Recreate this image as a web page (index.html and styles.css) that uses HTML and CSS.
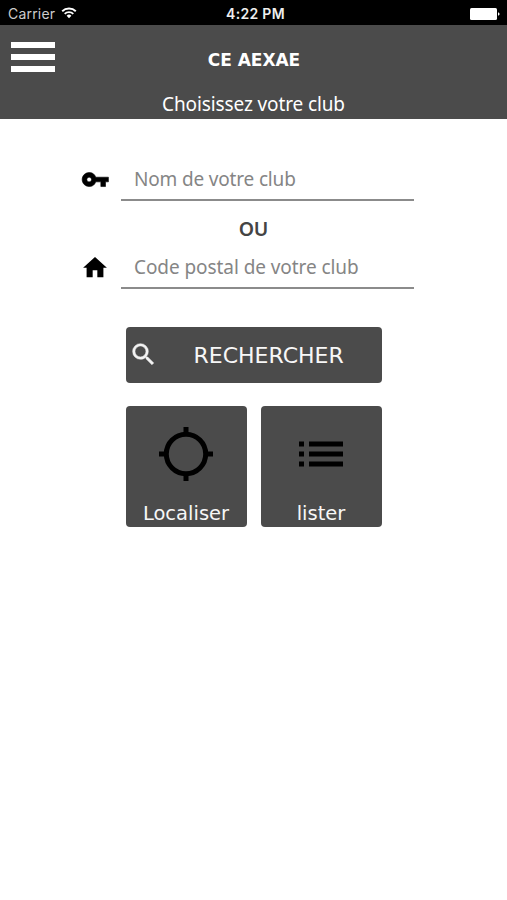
FILE: index.html
```html
<!DOCTYPE html>
<html lang="fr">
<head>
<meta charset="utf-8">
<title>CE AEXAE</title>
<link rel="stylesheet" href="styles.css">
</head>
<body>
<div class="status">
  <div class="carrier"><span>Carrier</span>
    <svg class="wifi" width="16" height="12" viewBox="0 0 16 12" fill="none" stroke="#fff" stroke-width="1.9"><path d="M1.2 4.3a9.8 9.8 0 0 1 13.6 0M3.7 6.9a6.2 6.2 0 0 1 8.6 0"/><path d="M8 11.2 5.6 8.8a3.4 3.4 0 0 1 4.8 0z" fill="#fff" stroke="none"/></svg>
  </div>
  <span class="clock">4:22 PM</span>
  <svg class="battery" width="30" height="12" viewBox="0 0 30 12" fill="#fff"><rect width="27" height="12" rx="1.5"/><path d="M28 4.2q1.6.6 1.6 1.8T28 7.8z"/></svg>
</div>
<header class="header">
  <button class="menu" aria-label="Menu"><i></i><i></i><i></i></button>
  <h1 class="title">CE AEXAE</h1>
  <p class="subtitle">Choisissez votre club</p>
</header>
<main>
  <div class="field">
    <svg width="28" height="28" viewBox="0 0 24 24"><path stroke="#000" stroke-width=".5" d="M12.650 9.600A5.990 5.990 0 0 0 7 5.600c-3.310 0-6 2.690-6 6s2.690 6 6 6a5.990 5.990 0 0 0 5.650-4H17v4h4v-4h2.500v-4H12.650zM7 13.600c-1.100 0-2-.9-2-2s.9-2 2-2 2 .9 2 2-.9 2-2 2z"/></svg>
    <div class="input"><span class="name">Nom de votre club</span></div>
  </div>
  <p class="or">OU</p>
  <div class="field">
    <svg width="28" height="28" viewBox="0 0 24 24"><path d="M10 20v-6h4v6h5.200v-8.200h3L12 2.500 1.800 11.800h3V20z"/></svg>
    <div class="input"><span class="postal">Code postal de votre club</span></div>
  </div>
  <div class="actions">
    <button class="search">
      <svg width="29" height="29" viewBox="0 0 24 24" fill="#f2f2f2" stroke="#f2f2f2" stroke-width=".4"><path d="M15.500 14h-.79l-.28-.27A6.471 6.471 0 0 0 16 9.500 6.500 6.500 0 1 0 9.500 16c1.610 0 3.090-.59 4.230-1.570l.27.28v.79l5 4.990L20.490 19l-4.990-5zm-6 0C7.010 14 5 11.990 5 9.500S7.010 5 9.500 5 14 7.010 14 9.500 11.990 14 9.500 14z"/></svg>
      <span>RECHERCHER</span>
    </button>
    <button class="tile">
      <svg width="54" height="54" viewBox="0 0 54 54" fill="none" stroke="#000" stroke-width="5"><circle cx="27" cy="27" r="19.700"/><path d="M27 0v8M27 46v8M0 27h8M46 27h8"/></svg>
      <span class="locate">Localiser</span>
    </button>
    <button class="tile">
      <svg width="54" height="54" viewBox="0 0 54 54"><path d="M5 14.500h5v5H5zM15 14.500h34v5H15zM5 24.500h5v5H5zM15 24.500h34v5H15zM5 34.500h5v5H5zM15 34.500h34v5H15z"/></svg>
      <span class="list">lister</span>
    </button>
  </div>
</main>
</body>
</html>
```
FILE: styles.css
```css
* { box-sizing: border-box; }
body { margin: 0; min-height: 900px; background: #fff; font-family: "Noto Sans", sans-serif; }
h1, p { margin: 0; }
button { border: 0; padding: 0; font: inherit; }
span { white-space: nowrap; }
.status { height: 25px; background: #000; color: #fff; display: grid; grid-template-columns: 1fr auto 1fr; align-items: center; padding: 2px 7px 0 8px; font: 14px/20px Inter, sans-serif; }
.carrier { display: flex; align-items: center; gap: 6px; color: #ccc; letter-spacing: 0.2px; }
.clock { font-weight: 600; color: #eee; letter-spacing: 0.3px; padding-left: 3px; }
.battery { justify-self: end; }
.wifi { margin-top: -2px; }
.header { height: 94px; background: #4b4b4b; color: #fff; display: grid; grid-template-columns: 55px 1fr 55px; grid-template-rows: 66px 28px; text-align: center; }
.menu { background: none; display: flex; flex-direction: column; gap: 6px; padding: 17px 0 0 11px; }
.menu i { width: 44px; height: 6px; background: #fff; }
.title { font: bold 17px/20px "DejaVu Sans", sans-serif; padding: 25px 0 0 1px; letter-spacing: -0.05px; }
.subtitle { grid-column: 1 / 4; font-size: 19px; line-height: 26px; letter-spacing: -0.12px; }
main { padding-top: 40px; }
.field { display: flex; align-items: center; height: 42px; width: 333px; margin-left: 81px; gap: 12px; }
.input { width: 293px; height: 42px; border-bottom: 2px solid #8b8b8b; padding-left: 13px; font-size: 19px; line-height: 40px; color: #858585; }
.name { letter-spacing: -0.17px; }
.postal { letter-spacing: -0.07px; }
.or { height: 46px; padding-top: 7px; font-size: 19.500px; line-height: 42px; font-weight: 600; text-align: center; color: #444; letter-spacing: -0.3px; }
.actions { display: grid; grid-template-columns: 121px 121px; column-gap: 14px; row-gap: 23px; justify-content: center; margin-top: 38px; }
.search { grid-column: 1 / 3; height: 56px; display: flex; align-items: center; background: #4b4b4b; border-radius: 4px; color: #f7f7f7; font: 22px/30px "DejaVu Sans", sans-serif; padding-left: 3px; }
.search svg { flex: none; margin-top: -2px; }
.search span { margin: 2px 0 0 36px; }
.tile { height: 121px; background: #4b4b4b; border-radius: 4px; color: #f7f7f7; display: flex; flex-direction: column; align-items: center; padding-top: 21px; font: 19.500px/24px "DejaVu Sans", sans-serif; }
.tile span { margin-top: 21px; }
```
